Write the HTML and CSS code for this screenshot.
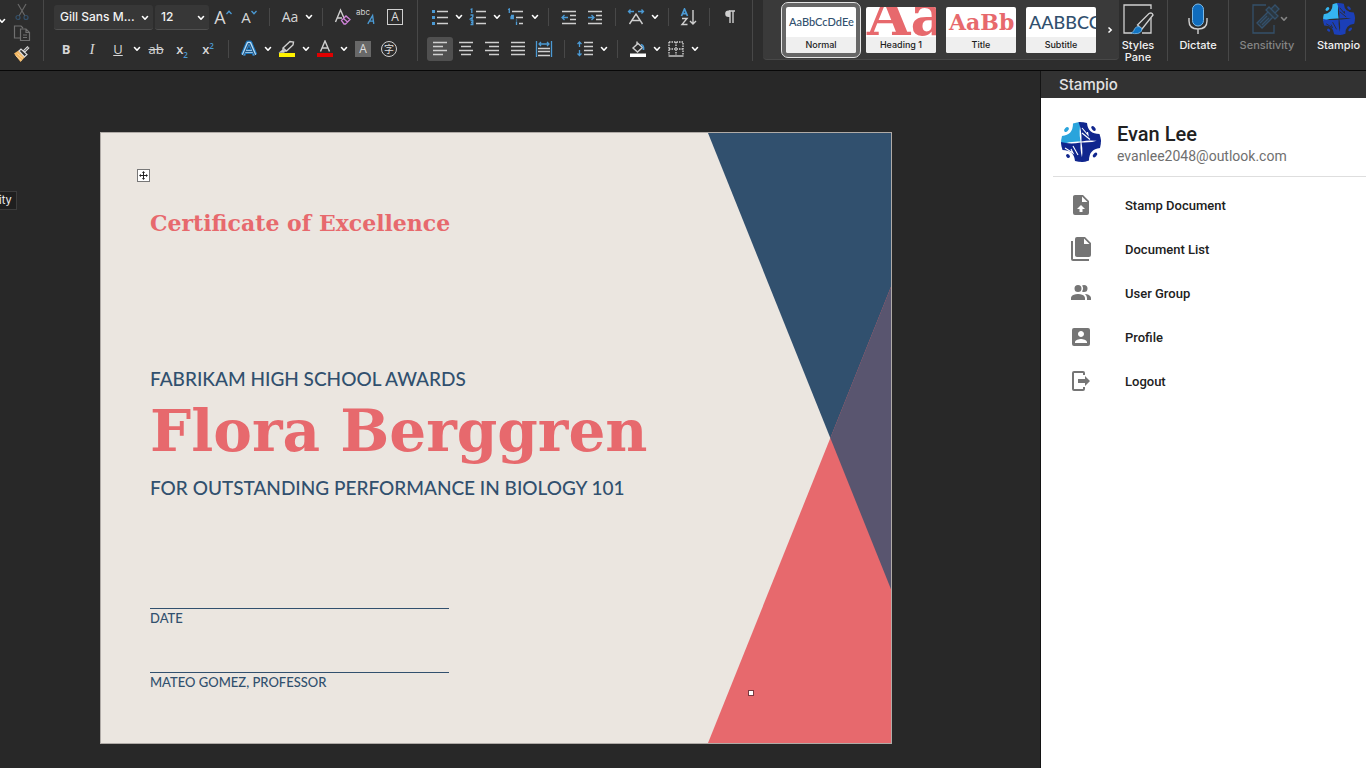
FILE: index.html
```
<!DOCTYPE html>
<html lang="en">
<head>
<meta charset="utf-8">
<meta name="viewport" content="width=device-width, initial-scale=1">
<title>Certificate of Excellence</title>
<link rel="stylesheet" href="styles.css">
</head>
<body>
<svg class="defs" aria-hidden="true">
  <symbol id="chev" viewBox="0 0 8 6"><path d="M1.500 1.500 4 4.200 6.500 1.500" fill="none" stroke="currentColor" stroke-width="1.600" stroke-linecap="round" stroke-linejoin="round"/></symbol>
  <symbol id="stampio" viewBox="0 0 40 40">
    <path fill="var(--light)" d="M12 1.500Q16 0 20 0Q17.500 9 19.500 19.500Q9 19 0 22.500Q0 17 1 14Q12 13 12 1.500Z"/>
    <g fill="var(--deep)">
      <path transform="rotate(90 20 20)" d="M12 1.500Q16 0 20 0Q17.500 9 19.500 19.500Q9 19 0 22.500Q0 17 1 14Q12 13 12 1.500Z"/>
      <path transform="rotate(180 20 20)" d="M12 1.500Q16 0 20 0Q17.500 9 19.500 19.500Q9 19 0 22.500Q0 17 1 14Q12 13 12 1.500Z"/>
      <path transform="rotate(270 20 20)" d="M12 1.500Q16 0 20 0Q17.500 9 19.500 19.500Q9 19 0 22.500Q0 17 1 14Q12 13 12 1.500Z"/>
      <ellipse cx="32.500" cy="6.500" rx="2.800" ry="1.600" transform="rotate(45 32.500 6.500)"/>
      <ellipse cx="34" cy="33" rx="2.800" ry="1.600" transform="rotate(-45 34 33)"/>
      <ellipse cx="7" cy="34" rx="2.200" ry="1.600" transform="rotate(45 7 34)"/>
    </g>
    <ellipse cx="5.500" cy="7.500" rx="2.800" ry="1.900" transform="rotate(-45 5.500 7.500)" fill="var(--light)"/>
    <path d="M21 6 27 13 26.500 10M21 11 29 17.500M12 24 17 33M4 26 12 31 10 27" fill="none" stroke="var(--gap)" stroke-width="1.100"/>
  </symbol>
</svg>

<header class="ribbon">
  <section class="clip" aria-label="Clipboard">
    <button class="paste-more" aria-label="Paste options"><svg class="chev"><use href="#chev"/></svg></button>
    <div class="clip-col">
      <button aria-label="Cut"><svg width="16" height="18" viewBox="0 0 16 18" fill="none" stroke="#686868" stroke-width="1.200"><path d="M4 1 11 13M12 1 5 13"/><circle cx="4" cy="14.500" r="2" stroke="#34506a"/><circle cx="12" cy="14.500" r="2" stroke="#34506a"/></svg></button>
      <button aria-label="Copy"><svg width="18" height="18" viewBox="0 0 18 18" fill="none" stroke="#707070" stroke-width="1.200"><path d="M7 14H1.500V2H8L10 4M7.500 5H13L16.500 8.500V16.500H7.500ZM13 5V8.500H16.500M10 11H14M10 13.500H14"/></svg></button>
      <button aria-label="Format painter"><svg width="18" height="18" viewBox="0 0 18 18"><path d="M1 8.500 5.500 5.500 12 12 7.500 17Z" fill="#f2b763"/><path d="M2.500 10.500 8.500 15.500M4.500 8.500 10 13.500" stroke="#fbe0b4" stroke-width=".8"/><path d="M6 6 8 4 14 9.500 11.500 12Z" fill="#2d2d2d" stroke="#ddd" stroke-width="1.200"/><path d="M11 6.500 15.500 2" stroke="#ddd" stroke-width="3"/><path d="M11.500 6 15 2.500" stroke="#2d2d2d"/></svg></button>
    </div>
  </section>

  <section class="group" aria-label="Font">
    <div class="row">
      <span class="combo combo-font"><select aria-label="Font name"><option>Gill Sans M...</option></select><svg class="chev"><use href="#chev"/></svg></span>
      <span class="combo combo-size"><select aria-label="Font size"><option>12</option></select><svg class="chev"><use href="#chev"/></svg></span>
      <button class="tool" aria-label="Increase font size"><span class="glyph g-big">A</span><svg class="mark" width="6" height="5" viewBox="0 0 6 5"><path d="M.5 4 3 1.300 5.500 4" class="blue"/></svg></button>
      <button class="tool" aria-label="Decrease font size"><span class="glyph g-mid">A</span><svg class="mark" width="6" height="5" viewBox="0 0 6 5"><path d="M.5 1 3 3.700 5.500 1" class="blue"/></svg></button>
      <i class="sep"></i>
      <button class="tool" aria-label="Change case"><span class="glyph">Aa</span></button><button class="more" aria-label="Case options"><svg class="chev"><use href="#chev"/></svg></button>
      <i class="sep"></i>
      <button class="tool" aria-label="Clear formatting"><svg width="18" height="18" viewBox="0 0 18 18" fill="none"><path d="M1.500 14 6.500 2 10 10M3.300 10H8" class="line"/><path d="M7.500 12.500 12 8 16 11.500 11.500 16H10ZM9.500 10.500 13.500 14" stroke="#cf82d8" stroke-width="1.300"/></svg></button>
      <button class="tool phonetic" aria-label="Phonetic guide"><span class="phon">abc</span><svg width="8" height="13" viewBox="0 0 10 13"><path d="M1 12 7 1.500 8.500 12M3.500 8.500H8" class="blue thick"/></svg></button>
      <button class="tool" aria-label="Character border"><span class="boxed">A</span></button>
    </div>
    <div class="row">
      <button class="tool" aria-label="Bold"><b class="glyph g-b">B</b></button>
      <button class="tool" aria-label="Italic"><i class="glyph g-i">I</i></button>
      <button class="tool" aria-label="Underline"><u class="glyph g-u">U</u></button><button class="more" aria-label="Underline options"><svg class="chev"><use href="#chev"/></svg></button>
      <button class="tool" aria-label="Strikethrough"><s class="glyph g-u">ab</s></button>
      <button class="tool" aria-label="Subscript"><span class="glyph g-x">x<sub>2</sub></span></button>
      <button class="tool" aria-label="Superscript"><span class="glyph g-x">x<sup>2</sup></span></button>
      <i class="sep"></i>
      <button class="tool" aria-label="Text effects"><svg width="18" height="18" viewBox="0 0 18 18" fill="none" stroke-linejoin="round"><path d="M3 15 8 3H10L15 15M5 11.500H13" stroke="#1873ba" stroke-width="4.800"/><path d="M3 15 8 3H10L15 15M5 11.500H13" stroke="#b9dcf5" stroke-width="2.600"/><path d="M3.500 15 8.500 3.500H9.500L14.500 15M5 11.500H13" stroke="#215684" stroke-width="1.200"/></svg></button><button class="more" aria-label="Text effect options"><svg class="chev"><use href="#chev"/></svg></button>
      <button class="tool" aria-label="Highlight"><svg width="18" height="18" viewBox="0 0 18 18" fill="none"><path d="M5 8 12 1.500 15.500 2 15 5 8.500 11H5ZM5 8 8.500 11M5 10 2.500 12H6.500" class="line"/><path d="M1 13H17V17H1Z" fill="#fff200"/></svg></button><button class="more" aria-label="Highlight colours"><svg class="chev"><use href="#chev"/></svg></button>
      <button class="tool" aria-label="Font colour"><svg width="18" height="18" viewBox="0 0 18 18" fill="none"><path d="M4.500 11.500 9 1 13.500 11.500M6 8H12" class="line"/><path d="M1 13H17V17H1Z" fill="#e00000"/></svg></button><button class="more" aria-label="Font colours"><svg class="chev"><use href="#chev"/></svg></button>
      <button class="tool" aria-label="Character shading"><span class="boxed shaded">A</span></button>
      <button class="tool" aria-label="Enclose characters"><span class="boxed ring">字</span></button>
    </div>
  </section>

  <section class="group" aria-label="Paragraph">
    <div class="row">
      <button class="tool" aria-label="Bullets"><svg width="18" height="18" viewBox="0 0 18 18" fill="none"><path d="M6 3.500H17M6 9.500H17M6 15.500H17" class="line"/><path d="M1 2H4V5H1ZM1 8H4V11H1ZM1 14H4V17H1Z" fill="#4b9ad4"/></svg></button><button class="more" aria-label="Bullet options"><svg class="chev"><use href="#chev"/></svg></button>
      <button class="tool" aria-label="Numbering"><svg width="18" height="18" viewBox="0 0 18 18" fill="none"><path d="M7 3.500H17M7 9.500H17M7 15.500H17" class="line"/><path d="M1.500 1.500 2.800 1V5M1.500 7H3.800V9L1.500 10.800H4M1.500 12.500H3.800V16.500H1.500M2 14.500H3.800" class="blue"/></svg></button><button class="more" aria-label="Numbering options"><svg class="chev"><use href="#chev"/></svg></button>
      <button class="tool" aria-label="Multilevel list"><svg width="18" height="18" viewBox="0 0 18 18" fill="none"><path d="M5 3.500H16M9 9.500H16M12 15.500H16" class="line"/><path d="M1 1.500 2.300 1V5M4 7.500H6.300V10.500H4V9H6.300M9.500 13.500V17M9.500 11.500V12.500" class="blue"/></svg></button><button class="more" aria-label="Multilevel options"><svg class="chev"><use href="#chev"/></svg></button>
      <i class="sep"></i>
      <button class="tool" aria-label="Decrease indent"><svg width="18" height="18" viewBox="0 0 18 18" fill="none"><path d="M2 3.500H16M10 7.500H16M10 11.500H16M2 15.500H16" class="line"/><path d="M8 9.500H2.500M4.500 7 2 9.500 4.500 12" class="blue"/></svg></button>
      <button class="tool" aria-label="Increase indent"><svg width="18" height="18" viewBox="0 0 18 18" fill="none"><path d="M2 3.500H16M10 7.500H16M10 11.500H16M2 15.500H16" class="line"/><path d="M2 9.500H7.500M5.500 7 8 9.500 5.500 12" class="blue"/></svg></button>
      <i class="sep"></i>
      <button class="tool" aria-label="Asian layout"><svg width="18" height="18" viewBox="0 0 18 18" fill="none"><path d="M2.500 16 9 6 15.500 16M5 12.500H13" class="line"/><path d="M7 3.500H1.500M3.500 1.500 1.500 3.500 3.500 5.500M11 3.500H16.500M14.500 1.500 16.500 3.500 14.500 5.500" class="blue"/></svg></button><button class="more" aria-label="Asian layout options"><svg class="chev"><use href="#chev"/></svg></button>
      <i class="sep"></i>
      <button class="tool" aria-label="Sort"><svg width="18" height="18" viewBox="0 0 18 18" fill="none"><path d="M1.500 8 4.500 1 7.500 8M2.500 5.700H6.500" class="blue thick"/><path d="M2 10.500H7L2 16.500H7.500" class="line"/><path d="M13 2V16M10 13 13 16 16 13" class="line"/></svg></button>
      <i class="sep"></i>
      <button class="tool" aria-label="Show formatting marks"><svg width="18" height="18" viewBox="0 0 18 18" fill="none"><path d="M9 3V15M12 3V15M14 3H8" class="line"/><path d="M9 2.500H7.500a3.300 3.300 0 0 0 0 6.600H9Z" fill="#cfcfcf"/></svg></button>
    </div>
    <div class="row">
      <button class="tool on" aria-label="Align left"><svg width="18" height="18" viewBox="0 0 18 18"><path d="M2 2.500H16M2 6.500H12M2 10.500H16M2 14.500H12" class="line"/></svg></button>
      <button class="tool" aria-label="Centre"><svg width="18" height="18" viewBox="0 0 18 18"><path d="M2 2.500H16M4 6.500H14M2 10.500H16M4 14.500H14" class="line"/></svg></button>
      <button class="tool" aria-label="Align right"><svg width="18" height="18" viewBox="0 0 18 18"><path d="M2 2.500H16M6 6.500H16M2 10.500H16M6 14.500H16" class="line"/></svg></button>
      <button class="tool" aria-label="Justify"><svg width="18" height="18" viewBox="0 0 18 18"><path d="M2 2.500H16M2 6.500H16M2 10.500H16M2 14.500H16" class="line"/></svg></button>
      <button class="tool" aria-label="Distribute"><svg width="18" height="18" viewBox="0 0 18 18" fill="none"><path d="M3 8.500H15M3 11.500H15M3 15.500H15" class="line"/><path d="M1.500 1V17M16.500 1V17M4 4H14M6 2 4 4 6 6M12 2 14 4 12 6" class="blue"/></svg></button>
      <i class="sep"></i>
      <button class="tool" aria-label="Line spacing"><svg width="18" height="18" viewBox="0 0 18 18" fill="none"><path d="M8 2.500H17M8 6.500H17M8 10.500H17M8 14.500H17" class="line"/><path d="M3.500 2V7M1.500 4 3.500 2 5.500 4M3.500 10V15.500M1.500 13.500 3.500 15.500 5.500 13.500" class="blue"/></svg></button><button class="more" aria-label="Line spacing options"><svg class="chev"><use href="#chev"/></svg></button>
      <i class="sep"></i>
      <button class="tool" aria-label="Shading"><svg width="18" height="18" viewBox="0 0 18 18" fill="none"><path d="M8 1.500V5M4 8 9 3.500 13.500 7.500 8.500 12Z" class="line"/><path d="M12 4.500Q15 5 14.500 10" class="blue thick"/><path d="M1 13.500H17V17H1Z" fill="#fff"/></svg></button><button class="more" aria-label="Shading options"><svg class="chev"><use href="#chev"/></svg></button>
      <button class="tool" aria-label="Borders"><svg width="18" height="18" viewBox="0 0 18 18" fill="none"><path d="M2 2H16V15M2 2V15M2 9H16M9 2V15" class="line" stroke-dasharray="1.500 1"/><path d="M1.500 16H16.500" class="line"/></svg></button><button class="more" aria-label="Border options"><svg class="chev"><use href="#chev"/></svg></button>
    </div>
  </section>

  <section class="gallery" aria-label="Styles">
    <button class="style selected"><span class="sample s-normal">AaBbCcDdEe</span><span class="name">Normal</span></button>
    <button class="style"><span class="sample s-heading">Aa</span><span class="name">Heading 1</span></button>
    <button class="style"><span class="sample s-title">AaBb</span><span class="name">Title</span></button>
    <button class="style"><span class="sample s-sub">AABBCC</span><span class="name">Subtitle</span></button>
    <button class="next" aria-label="More styles"><svg width="6" height="8" viewBox="0 0 6 8"><path d="M1.500 1.500 4.200 4 1.500 6.500" fill="none" stroke="#fff" stroke-width="1.500"/></svg></button>
  </section>

  <button class="big b-pane"><svg width="32" height="32" viewBox="0 0 32 32" fill="none"><path d="M29 15V30H20M10 30H2V2H29V6" stroke="#d0d0d0" stroke-width="1.300"/><path d="M15.500 22 27 10.500Q30 9 31 12L20 26Z" fill="#2d2d2d" stroke="#d0d0d0" stroke-width="1.300"/><path d="M9 30Q12 29 12.500 26 14 23 17 23.500 21 25 19.500 28 17 32 9 30Z" fill="#1175c4" stroke="#7fbdea" stroke-width=".8"/></svg><span>Styles<br>Pane</span></button>
  <button class="big b-dictate"><svg width="32" height="32" viewBox="0 0 32 32" fill="none"><rect x="10.500" y="1" width="11" height="22" rx="5.500" fill="#0f6cbd" stroke="#7dbbe8"/><path d="M7 15V18Q7 26 16 26T25 18V15M16 26V31" stroke="#d0d0d0" stroke-width="1.400"/></svg><span>Dictate</span></button>
  <button class="big b-sens" disabled><svg width="32" height="32" viewBox="0 0 32 32" fill="none" stroke="#34506a" stroke-width="1.300"><path d="M15 2H2V30H23V22"/><path d="M6 20 17 9 22 14 11 25ZM9 20 16 13M11 22 18 15M15 7 18 4 27 13 24 16ZM20 6 24 2 28 6 24 10" fill="#2b3740"/></svg><svg class="chev sens-chev"><use href="#chev"/></svg><span>Sensitivity</span></button>
  <button class="big b-stampio"><svg class="logo-dark" width="32" height="32"><use href="#stampio"/></svg><span>Stampio</span></button>
</header>

<div class="work">
  <main class="canvas">
    <div class="tip">ity</div>
    <article class="page">
      <svg class="art" viewBox="0 0 184 611" preserveAspectRatio="none" aria-hidden="true">
        <path d="M0 0H184V457Z" fill="#31506e"/>
        <path d="M0 611 184 154V611Z" fill="#e7696d"/>
        <path d="M123 305.500 184 154V457Z" fill="#59556f"/>
      </svg>
      <button class="move" aria-label="Move table"><svg width="9" height="9" viewBox="0 0 9 9"><path d="M4.500 1V8M1 4.500H8" stroke="#222"/><path d="M4.500 0 6 2H3ZM4.500 9 3 7H6ZM0 4.500 2 3V6ZM9 4.500 7 6V3Z" fill="#222"/></svg></button>
      <span class="handle"></span>
      <h2 class="cert">Certificate of Excellence</h2>
      <div class="award">
        <p class="caps">FABRIKAM HIGH SCHOOL AWARDS</p>
        <h1 class="winner">Flora Berggren</h1>
        <p class="caps">FOR OUTSTANDING PERFORMANCE IN BIOLOGY 101</p>
      </div>
      <div class="signs">
        <p class="sign">DATE</p>
        <p class="sign">MATEO GOMEZ, PROFESSOR</p>
      </div>
    </article>
  </main>

  <aside class="pane">
    <h2 class="pane-title">Stampio</h2>
    <div class="user">
      <svg class="logo-light" width="40" height="40"><use href="#stampio"/></svg>
      <div><div class="user-name">Evan Lee</div><div class="user-mail">evanlee2048@outlook.com</div></div>
    </div>
    <nav class="menu">
      <a href="#stamp"><svg viewBox="0 0 24 24"><path d="M14 2H6C4.890 2 4 2.890 4 4V20A2 2 0 0 0 6 22H18A2 2 0 0 0 20 20V8L14 2M13.500 16V19H10.500V16H8L12 12L16 16H13.500M13 9V3.500L18.500 9H13Z"/></svg>Stamp Document</a>
      <a href="#documents"><svg viewBox="0 0 24 24"><path d="M15 7H20.500L15 1.500V7M8 0H16L22 6V18A2 2 0 0 1 20 20H8C6.890 20 6 19.100 6 18V2A2 2 0 0 1 8 0M4 4V22H20V24H4A2 2 0 0 1 2 22V4H4Z"/></svg>Document List</a>
      <a href="#group"><svg viewBox="0 0 24 24"><path d="M16 17V19H2V17S2 13 9 13 16 17 16 17M12.500 7.500A3.500 3.500 0 1 0 9 11A3.500 3.500 0 0 0 12.500 7.500M15.940 13A5.320 5.320 0 0 1 18 17V19H22V17S22 13.370 15.940 13M15 4A3.390 3.390 0 0 0 13.070 4.590A5 5 0 0 1 13.070 10.410A3.390 3.390 0 0 0 15 11A3.500 3.500 0 0 0 15 4Z"/></svg>User Group</a>
      <a href="#profile"><svg viewBox="0 0 24 24"><path d="M3 5v14a2 2 0 0 0 2 2h14a2 2 0 0 0 2-2V5a2 2 0 0 0-2-2H5a2 2 0 0 0-2 2zm12 4c0 1.660-1.340 3-3 3s-3-1.340-3-3 1.340-3 3-3 3 1.340 3 3zm-9 8c0-2 4-3.100 6-3.100s6 1.100 6 3.100v1H6v-1z"/></svg>Profile</a>
      <a href="#logout"><svg viewBox="0 0 24 24"><path d="M16 17V14H9V10H16V7L21 12L16 17M14 2A2 2 0 0 1 16 4V6H14V4H5V20H14V18H16V20A2 2 0 0 1 14 22H5A2 2 0 0 1 3 20V4A2 2 0 0 1 5 2H14Z"/></svg>Logout</a>
    </nav>
  </aside>
</div>
</body>
</html>
```
FILE: styles.css
```
* { box-sizing: border-box; }

body {
  margin: 0;
  min-height: 100vh;
  display: flex;
  flex-direction: column;
  overflow: hidden;
  background: #282828;
  color: #f2f2f2;
  font-family: Inter, "Liberation Sans", sans-serif;
}

h1, h2, p { margin: 0; }

button {
  padding: 0;
  border: 0;
  background: none;
  color: inherit;
  font: inherit;
}

.defs { position: absolute; width: 0; height: 0; }
.line { stroke: #cfcfcf; stroke-width: 1.4; }
.blue { stroke: #4b9ad4; stroke-width: 1.3; fill: none; }
.thick { stroke-width: 1.7; }
.chev { width: 8px; height: 6px; color: #fff; }

/* Ribbon */
.ribbon {
  display: flex;
  align-items: flex-start;
  height: 71px;
  background: #2d2d2d;
  border-bottom: 1px solid #080808;
}

.clip, .group { display: flex; flex: none; height: 61px; border-right: 1px solid #484848; }
.clip { width: 44px; }
.paste-more { width: 12px; height: 36px; margin-left: -4px; }
.clip-col { display: flex; flex-direction: column; align-items: center; gap: 3px; width: 28px; padding-top: 3px; }
.clip-col button { display: flex; }

.group { flex-direction: column; gap: 2px; padding: 2px 9px 0; }
.group + .group { width: 335px; }
.row { display: flex; flex: none; align-items: center; height: 30px; }

.tool {
  position: relative;
  display: flex;
  flex: none;
  align-items: center;
  justify-content: center;
  width: 26px;
  height: 24px;
  border-radius: 3px;
}
.tool.on { background: #505050; }
.more { display: flex; flex: none; align-items: center; justify-content: center; width: 12px; height: 24px; }
.sep { flex: none; width: 1px; height: 18px; margin: 0 7px; background: #484848; }

.glyph { font-family: "Open Sans", sans-serif; font-size: 14px; line-height: 20px; color: #d6d6d6; }
.g-big { font-size: 18px; }
.g-mid { font-size: 15px; }
.g-b { font-weight: 700; font-size: 13px; }
.g-i { font-family: "Liberation Serif", serif; font-size: 15px; }
.g-u { font-size: 13px; }
.g-x { font-size: 13px; font-weight: 600; white-space: nowrap; }
.g-x sub, .g-x sup { color: #4b9ad4; font-size: 8px; line-height: 1px; }
.mark { margin: 0 0 10px; }
.phonetic { align-items: flex-start; justify-content: flex-start; }
.phonetic svg { margin-top: 8px; margin-left: -3px; flex: none; }
.phon { font-size: 8px; line-height: 14px; color: #d0d0d0; }
.boxed { width: 16px; height: 16px; border: 1px solid #cfcfcf; font: 12px/14px "Open Sans", sans-serif; color: #dedede; text-align: center; }
.shaded { background: #686868; border-color: #686868; }
.ring { border-radius: 50%; font: 10px/13px "Noto Sans CJK SC", sans-serif; }

.combo { position: relative; display: flex; height: 25px; margin-left: 1px; }
.combo select {
  width: 100%;
  padding: 0 16px 0 6px;
  appearance: none;
  border: 0;
  border-bottom: 1px solid #505050;
  border-radius: 3px;
  background: #373737;
  color: #f2f2f2;
  font: 500 12px/20px Inter, sans-serif;
}
.combo .chev { position: absolute; right: 4px; top: 10px; pointer-events: none; }
.combo-font { width: 99px; }
.combo-size { width: 54px; margin: 0 1px 0 2px; }

/* Style gallery */
.gallery {
  display: flex;
  flex: 1;
  align-items: center;
  justify-content: flex-end;
  gap: 10px;
  height: 60px;
  margin-left: 10px;
  border-radius: 0 0 4px 4px;
  border-bottom: 1px solid #484848;
  background: #3a3a3a;
}
.style {
  display: flex;
  flex: none;
  flex-direction: column;
  width: 70px;
  height: 46px;
  overflow: hidden;
  border-radius: 2px;
  background: #fff;
  color: #1c1c1c;
}
.selected { outline: 1px solid #e4e4e4; outline-offset: 4px; box-shadow: 0 0 0 4px #666; }
.sample { display: flex; align-items: center; width: 100%; height: 30px; padding-left: 3px; overflow: hidden; white-space: nowrap; color: #31506e; }
.name { width: 100%; height: 16px; background: #efefef; font-size: 9px; font-weight: 500; line-height: 15px; text-align: center; }
.s-normal { font: 500 11px/30px Lato, sans-serif; }
.s-heading { align-items: flex-end; padding-left: 1px; font: 700 56px/44px "DejaVu Serif", serif; color: #e7696d; }
.s-title { font: 700 22px/30px "DejaVu Serif", serif; color: #e7696d; }
.s-sub { font: 500 18px/30px Lato, sans-serif; }
.next { display: flex; justify-content: center; width: 12px; margin-right: 3px; margin-left: -2px; }

/* Large ribbon buttons */
.big {
  position: relative;
  display: flex;
  flex: none;
  flex-direction: column;
  align-items: center;
  justify-content: flex-start;
  gap: 4px;
  height: 61px;
  padding-top: 3px;
  border-right: 1px solid #484848;
  font-size: 11px;
  font-weight: 500;
  line-height: 12px;
}
.big svg { flex: none; }
.b-pane { width: 49px; padding-right: 10px; }
.b-dictate { width: 61px; }
.b-sens { width: 77px; color: #858585; }
.b-stampio { width: 60px; padding-left: 5px; border-right: 0; }
.sens-chev { position: absolute; right: 17px; top: 16px; color: #858585; }
.logo-dark { --light: #35b5f0; --deep: #1b3fb8; --gap: #2d2d2d; }
.logo-light { --light: #2aa4dc; --deep: #10268e; --gap: #fff; flex: none; }

/* Document */
.work { display: flex; flex: 1; }
.canvas { position: relative; display: flex; flex: 1; padding: 61px 148px 24px 100px; }
.tip {
  position: absolute;
  left: -2px;
  top: 120px;
  padding: 0 4px 0 0;
  border: 1px solid #3c3c3c;
  background: #1f1f1f;
  font-size: 11px;
  line-height: 17px;
}
.page {
  position: relative;
  display: flex;
  flex: 1;
  flex-direction: column;
  padding: 75px 49px 0;
  border: 1px solid #b0aba7;
  background: #ebe6e0;
  color: #31506e;
}
.art { position: absolute; right: 0; top: 0; width: 183px; height: 100%; }
.move { position: absolute; left: 36px; top: 36px; display: flex; align-items: center; justify-content: center; width: 13px; height: 13px; border: 1px solid #777; background: #fff; }
.handle { position: absolute; left: 647px; bottom: 47px; width: 6px; height: 6px; border: 1px solid #7a3a40; background: #fff; }
.cert { color: #e7696d; font: 700 22px/30px "DejaVu Serif", serif; }
.award { padding-top: 128px; }
.caps { font: 500 19px/26px Lato, sans-serif; }
.winner { padding-bottom: 5px; color: #e7696d; font: 700 58px/78px "DejaVu Serif", serif; white-space: nowrap; }
.signs { display: flex; flex-direction: column; gap: 44px; padding-top: 107px; }
.sign { width: 299px; border-top: 1px solid #31506e; font: 500 13px/19px Lato, sans-serif; }

/* Add-in pane */
.pane { width: 326px; flex: none; border-left: 1px solid #141414; background: #fff; color: #212121; font-family: Roboto, sans-serif; }
.pane-title { padding: 0 18px; background: #323232; color: #e2e2e2; font: 500 15px/27px Inter, sans-serif; }
.user { display: flex; align-items: flex-start; gap: 16px; margin-left: 12px; padding: 24px 0 10px 8px; border-bottom: 1px solid #dedede; }
.user-name { font-size: 20px; font-weight: 500; line-height: 24px; }
.user-mail { color: #6f6f6f; font-size: 14px; line-height: 20px; }
.menu { padding-top: 6px; }
.menu a { display: flex; align-items: center; gap: 32px; height: 44px; padding-left: 28px; color: #212121; font-size: 13px; font-weight: 500; text-decoration: none; }
.menu svg { width: 24px; height: 24px; fill: #757575; }
```
